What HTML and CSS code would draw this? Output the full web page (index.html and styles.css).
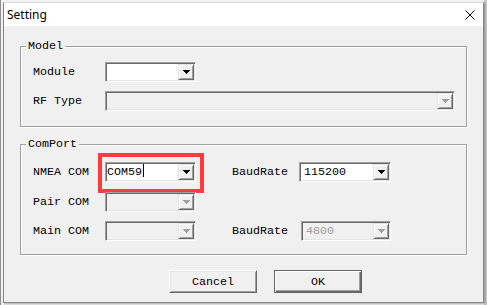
FILE: index.html
```html
<!DOCTYPE html>
<html lang="en">
<head>
  <meta charset="UTF-8" />
  <title>Setting</title>
  <link rel="stylesheet" href="styles.css">
</head>
<body>
  <div class="dialog">
    <!-- Title bar -->
    <div class="titlebar">
      <span class="title">Setting</span>
      <svg class="close" width="10" height="10" viewBox="0 0 10 10">
        <path d="M0.5 0.5L9.5 9.5M9.5 0.5L0.5 9.5" stroke="#000" stroke-width="1" fill="none"/>
      </svg>
    </div>

    <div class="dialog-body">
      <!-- Model group -->
      <fieldset class="group group-model">
        <legend>Model</legend>
        <div class="rows">
          <div class="row">
            <span class="label">Module</span>
            <div class="combo">
              <span class="combo-text"></span>
              <span class="combo-btn"><svg width="7" height="4" viewBox="0 0 7 4"><path d="M0 0h7v1h-1v1h-1v1h-1v1h-1v-1h-1v-1h-1v-1h-1z"/></svg></span>
            </div>
          </div>
          <div class="row">
            <span class="label">RF Type</span>
            <div class="combo combo-wide disabled">
              <span class="combo-text"></span>
              <span class="combo-btn"><svg width="7" height="4" viewBox="0 0 7 4"><path d="M0 0h7v1h-1v1h-1v1h-1v1h-1v-1h-1v-1h-1v-1h-1z"/></svg></span>
            </div>
          </div>
        </div>
      </fieldset>

      <!-- ComPort group -->
      <fieldset class="group group-port">
        <legend>ComPort</legend>
        <div class="rows rows-port">
          <div class="row">
            <span class="label">NMEA COM</span>
            <div class="combo combo-edit marked">
              <span class="combo-text">COM59<i class="caret"></i></span>
              <span class="combo-btn"><svg width="7" height="4" viewBox="0 0 7 4"><path d="M0 0h7v1h-1v1h-1v1h-1v1h-1v-1h-1v-1h-1v-1h-1z"/></svg></span>
            </div>
            <span class="label label-baud">BaudRate</span>
            <div class="combo combo-baud">
              <span class="combo-text">115200</span>
              <span class="combo-btn"><svg width="7" height="4" viewBox="0 0 7 4"><path d="M0 0h7v1h-1v1h-1v1h-1v1h-1v-1h-1v-1h-1v-1h-1z"/></svg></span>
            </div>
          </div>
          <div class="row">
            <span class="label">Pair COM</span>
            <div class="combo disabled">
              <span class="combo-text"></span>
              <span class="combo-btn"><svg width="7" height="4" viewBox="0 0 7 4"><path d="M0 0h7v1h-1v1h-1v1h-1v1h-1v-1h-1v-1h-1v-1h-1z"/></svg></span>
            </div>
          </div>
          <div class="row">
            <span class="label">Main COM</span>
            <div class="combo disabled">
              <span class="combo-text"></span>
              <span class="combo-btn"><svg width="7" height="4" viewBox="0 0 7 4"><path d="M0 0h7v1h-1v1h-1v1h-1v1h-1v-1h-1v-1h-1v-1h-1z"/></svg></span>
            </div>
            <span class="label label-baud">BaudRate</span>
            <div class="combo combo-baud2 disabled">
              <span class="combo-text">4800</span>
              <span class="combo-btn"><svg width="7" height="4" viewBox="0 0 7 4"><path d="M0 0h7v1h-1v1h-1v1h-1v1h-1v-1h-1v-1h-1v-1h-1z"/></svg></span>
            </div>
          </div>
        </div>
      </fieldset>

      <div class="actions">
        <button class="btn">Cancel</button>
        <button class="btn btn-default">OK</button>
      </div>
    </div>
  </div>
</body>
</html>
```

FILE: styles.css
```css
:root {
  --face: #f0f0f0;
  --light: #e3e3e3;
  --shadow: #a0a0a0;
  --dark: #696969;
  --mark: #ff3b3b;
}

* {
  box-sizing: border-box;
}

html {
  height: 100%;
  background: linear-gradient(to left, #c6c6c6 3px, #f3f3f3 3px);
}

body {
  margin: 0;
  padding: 2px 0 0 2px;
  height: 305px;
  border-left: 1px solid #8e8e8e;
  font-family: 'Liberation Mono', monospace;
  font-size: 11.67px;
  color: #000;
  overflow: hidden;
}

.dialog {
  width: 481px;
  height: 301px;
  border: 1px solid #868686;
  border-top-color: #d8d8d8;
  background: var(--face);
  box-shadow: 1px 1px 2px rgba(0, 0, 0, 0.3);
}

.titlebar {
  display: flex;
  justify-content: space-between;
  align-items: center;
  height: 23px;
  padding: 0 8px 0 3px;
  background: #fff;
}

.title {
  font-family: 'Noto Sans', sans-serif;
  font-size: 12px;
}

.close {
  display: block;
}

.dialog-body {
  padding: 0 16px;
}

.group {
  margin: 0;
  padding: 0;
  border: 1px solid var(--shadow);
  box-shadow: inset 1px 1px 0 #fff, 1px 1px 0 #fff;
  min-width: 0;
}

.group legend {
  margin-left: 5px;
  padding: 0 2px;
  line-height: 14px;
  background: var(--face);
}

.group-model {
  margin-top: 13px;
}

.group-port {
  margin-top: 10px;
}

.rows {
  display: flex;
  flex-direction: column;
  gap: 9px;
  padding: 9px 0 15px 12px;
}

.rows-port {
  gap: 9.5px;
  padding: 11px 0 13px 12px;
}

.row {
  display: flex;
  align-items: center;
  height: 20px;
}

.label {
  flex: none;
  width: 72px;
}

.label-baud {
  width: 67px;
  margin-left: 36px;
}

.combo {
  position: relative;
  display: flex;
  flex: none;
  width: 91px;
  height: 20px;
  padding: 1px;
  border: 1px solid;
  border-color: var(--shadow) #fff #fff var(--shadow);
  box-shadow: inset 1px 1px 0 var(--dark), inset -1px -1px 0 var(--light);
  background: #fff;
}

.combo-wide {
  width: 350px;
}

.combo-baud {
  width: 92px;
}

.combo-baud2 {
  width: 90px;
  margin-left: 2px;
}

.combo-text {
  flex: 1;
  padding-left: 3px;
  line-height: 16px;
  white-space: nowrap;
}

.combo-edit .combo-text {
  padding-left: 0;
}

.caret {
  display: inline-block;
  width: 1px;
  height: 13px;
  margin-left: 1px;
  vertical-align: -2px;
  background: #000;
}

.combo-btn {
  display: flex;
  justify-content: center;
  align-items: center;
  width: 16px;
  height: 16px;
  border: 1px solid;
  border-color: var(--light) var(--dark) var(--dark) var(--light);
  box-shadow: inset 1px 1px 0 #fff, inset -1px -1px 0 var(--shadow);
  background: var(--face);
  fill: #000;
}

.combo-btn svg {
  display: block;
  shape-rendering: crispEdges;
}

.disabled {
  background: var(--face);
  color: var(--shadow);
}

.disabled .combo-btn {
  fill: var(--shadow);
}

/* red annotation round the NMEA port box */
.marked::after {
  content: '';
  position: absolute;
  left: -8px;
  top: -10px;
  right: -9px;
  bottom: -12px;
  border: 4px solid var(--mark);
}

.actions {
  display: flex;
  gap: 17px;
  margin-top: 15px;
  padding-left: 149px;
}

.btn {
  width: 88px;
  height: 23px;
  padding: 0;
  border: 1px solid;
  border-color: #fff var(--dark) var(--dark) #fff;
  box-shadow: inset 1px 1px 0 var(--light), inset -1px -1px 0 var(--shadow);
  background: var(--face);
  font-family: 'Liberation Mono', monospace;
  font-size: 11.67px;
  color: #000;
}

.btn-default {
  border-color: #646464;
  box-shadow: inset 1px 1px 0 #fff, inset -1px -1px 0 var(--dark), inset -2px -2px 0 var(--shadow);
}
```
